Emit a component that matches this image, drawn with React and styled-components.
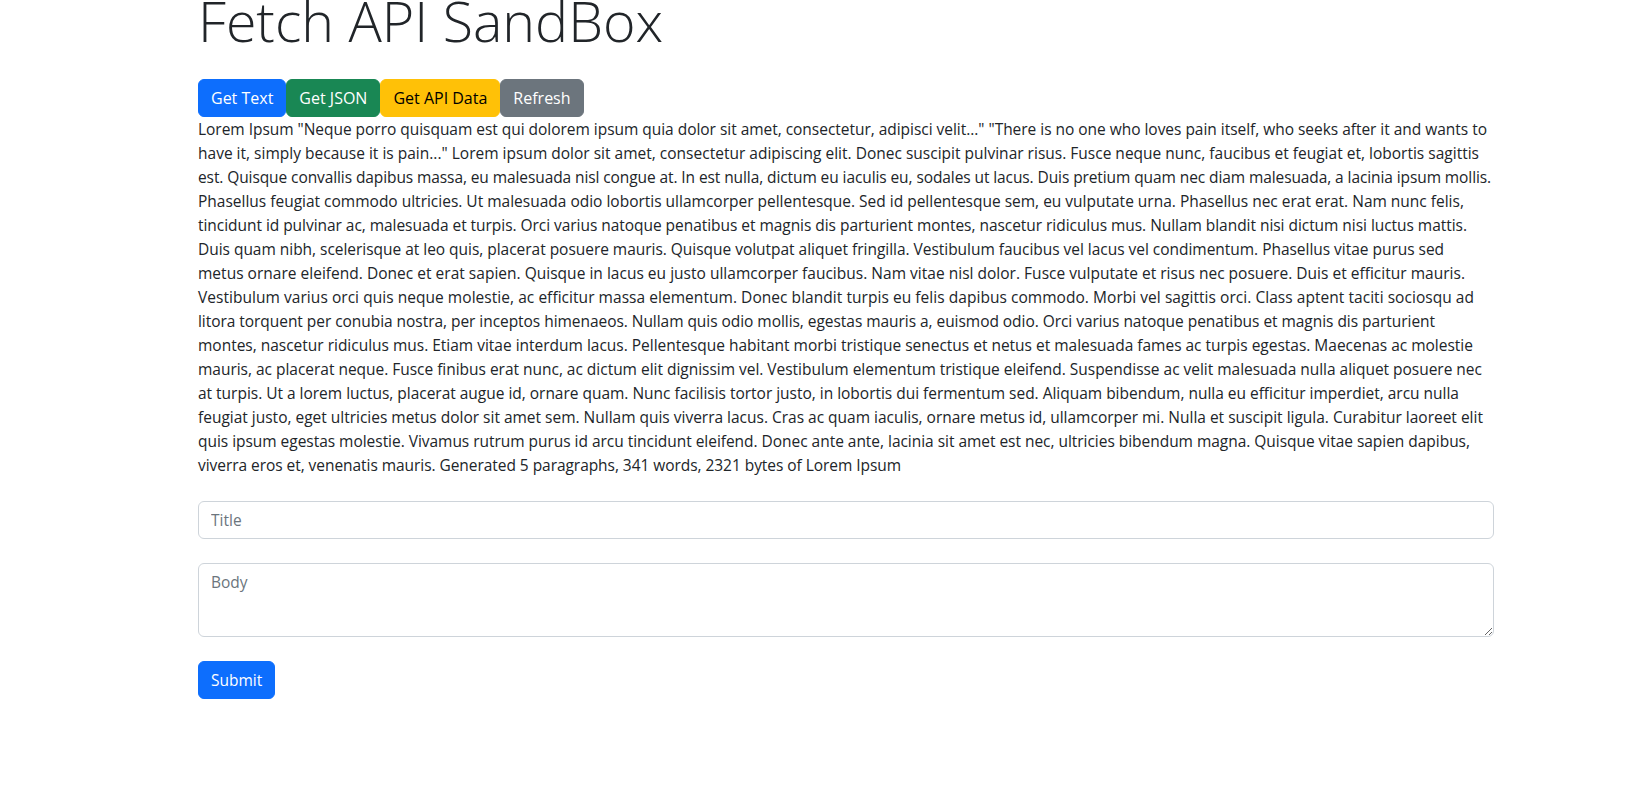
import React, { useLayoutEffect, useRef, useState } from "react";
import styled, { createGlobalStyle } from "styled-components";

const GlobalStyle = createGlobalStyle`
  *, *::before, *::after { box-sizing: border-box; }
  body {
    margin: 0;
    background: #fff;
    color: #212529;
    font-family: "Open Sans", "Noto Sans", sans-serif;
    font-size: 15.5px;
    line-height: 24px;
  }
`;

const Container = styled.main`
  width: 1296px;
  margin-left: 198px;
`;

const Heading = styled.h1`
  margin: -12px 0 24px;
  font-size: 55.5px;
  font-weight: 300;
  line-height: 1.2;
  color: #212529;
`;

const Toolbar = styled.div`
  display: flex;
`;

const variants = {
  primary: { bg: "#0d6efd", fg: "#fff" },
  success: { bg: "#198754", fg: "#fff" },
  warning: { bg: "#ffc107", fg: "#000" },
  secondary: { bg: "#6c757d", fg: "#fff" },
};

const Button = styled.button`
  display: inline-block;
  padding: 6px 12px;
  border: 1px solid ${(p) => variants[p.$variant].bg};
  border-radius: 6px;
  background: ${(p) => variants[p.$variant].bg};
  color: ${(p) => variants[p.$variant].fg};
  font-family: "Open Sans", "Noto Sans", sans-serif;
  font-size: ${(p) => (p.$compact ? "15.5px" : "16px")};
  line-height: 24px;
  cursor: pointer;
`;

const Paragraph = styled.p`
  margin: 0;
`;

const LineText = styled.span`
  display: block;
  width: max-content;
  white-space: nowrap;
`;

const Form = styled.form`
  display: flex;
  flex-direction: column;
  align-items: flex-start;
  gap: 24px;
  margin-top: 24px;
`;

const fieldBase = `
  display: block;
  width: 100%;
  padding: 6px 12px;
  border: 1px solid #ced4da;
  border-radius: 6px;
  background: #fff;
  color: #212529;
  font-family: "Open Sans", "Noto Sans", sans-serif;
  font-size: 15.5px;
  line-height: 24px;
  outline: none;
  &::placeholder { color: #6c757d; opacity: 1; }
`;

const Input = styled.input`
  ${fieldBase}
  height: 38px;
`;

const TextArea = styled.textarea`
  ${fieldBase}
  height: 74px;
  resize: vertical;
`;

const lines = [
  [`Lorem Ipsum "Neque porro quisquam est qui dolorem ipsum quia dolor sit amet, consectetur, adipisci velit..." "There is no one who loves pain itself, who seeks after it and wants to`, 1289],
  [`have it, simply because it is pain..." Lorem ipsum dolor sit amet, consectetur adipiscing elit. Donec suscipit pulvinar risus. Fusce neque nunc, faucibus et feugiat et, lobortis sagittis`, 1281],
  [`est. Quisque convallis dapibus massa, eu malesuada nisl congue at. In est nulla, dictum eu iaculis eu, sodales ut lacus. Duis pretium quam nec diam malesuada, a lacinia ipsum mollis.`, 1293],
  [`Phasellus feugiat commodo ultricies. Ut malesuada odio lobortis ullamcorper pellentesque. Sed id pellentesque sem, eu vulputate urna. Phasellus nec erat erat. Nam nunc felis,`, 1266],
  [`tincidunt id pulvinar ac, malesuada et turpis. Orci varius natoque penatibus et magnis dis parturient montes, nascetur ridiculus mus. Nullam blandit nisi dictum nisi luctus mattis.`, 1269],
  [`Duis quam nibh, scelerisque at leo quis, placerat posuere mauris. Quisque volutpat aliquet fringilla. Vestibulum faucibus vel lacus vel condimentum. Phasellus vitae purus sed`, 1246],
  [`metus ornare eleifend. Donec et erat sapien. Quisque in lacus eu justo ullamcorper faucibus. Nam vitae nisl dolor. Fusce vulputate et risus nec posuere. Duis et efficitur mauris.`, 1267],
  [`Vestibulum varius orci quis neque molestie, ac efficitur massa elementum. Donec blandit turpis eu felis dapibus commodo. Morbi vel sagittis orci. Class aptent taciti sociosqu ad`, 1276],
  [`litora torquent per conubia nostra, per inceptos himenaeos. Nullam quis odio mollis, egestas mauris a, euismod odio. Orci varius natoque penatibus et magnis dis parturient`, 1237],
  [`montes, nascetur ridiculus mus. Etiam vitae interdum lacus. Pellentesque habitant morbi tristique senectus et netus et malesuada fames ac turpis egestas. Maecenas ac molestie`, 1275],
  [`mauris, ac placerat neque. Fusce finibus erat nunc, ac dictum elit dignissim vel. Vestibulum elementum tristique eleifend. Suspendisse ac velit malesuada nulla aliquet posuere nec`, 1284],
  [`at turpis. Ut a lorem luctus, placerat augue id, ornare quam. Nunc facilisis tortor justo, in lobortis dui fermentum sed. Aliquam bibendum, nulla eu efficitur imperdiet, arcu nulla`, 1261],
  [`feugiat justo, eget ultricies metus dolor sit amet sem. Nullam quis viverra lacus. Cras ac quam iaculis, ornare metus id, ullamcorper mi. Nulla et suscipit ligula. Curabitur laoreet elit`, 1285],
  [`quis ipsum egestas molestie. Vivamus rutrum purus id arcu tincidunt eleifend. Donec ante ante, lacinia sit amet est nec, ultricies bibendum magna. Quisque vitae sapien dapibus,`, 1272],
  [`viverra eros et, venenatis mauris. Generated 5 paragraphs, 341 words, 2321 bytes of Lorem Ipsum`, 703],
];

function FittedLine({ text, width }) {
  const ref = useRef(null);
  const [spacing, setSpacing] = useState(0);
  useLayoutEffect(() => {
    const fit = () => {
      const el = ref.current;
      if (!el) return;
      const current = parseFloat(getComputedStyle(el).letterSpacing) || 0;
      const measured = el.getBoundingClientRect().width;
      const natural = measured - current * text.length;
      const next = (width - natural) / text.length;
      setSpacing(Math.round(next * 1000) / 1000);
    };
    fit();
    if (document.fonts && document.fonts.ready) document.fonts.ready.then(fit);
  }, [text, width]);
  return (
    <LineText ref={ref} style={{ letterSpacing: `${spacing}px` }}>
      {text}
    </LineText>
  );
}

export default function App() {
  return (
    <>
      <GlobalStyle />
      <Container>
        <Heading>Fetch API SandBox</Heading>
        <Toolbar>
          <Button $variant="primary">Get Text</Button>
          <Button $variant="success">Get JSON</Button>
          <Button $variant="warning">Get API Data</Button>
          <Button $variant="secondary">Refresh</Button>
        </Toolbar>
        <Paragraph>
          {lines.map(([t, w], i) => (
            <FittedLine key={i} text={t} width={w} />
          ))}
        </Paragraph>
        <Form onSubmit={(e) => e.preventDefault()}>
          <Input type="text" placeholder="Title" />
          <TextArea placeholder="Body" />
          <Button $variant="primary" $compact type="submit">Submit</Button>
        </Form>
      </Container>
    </>
  );
}
